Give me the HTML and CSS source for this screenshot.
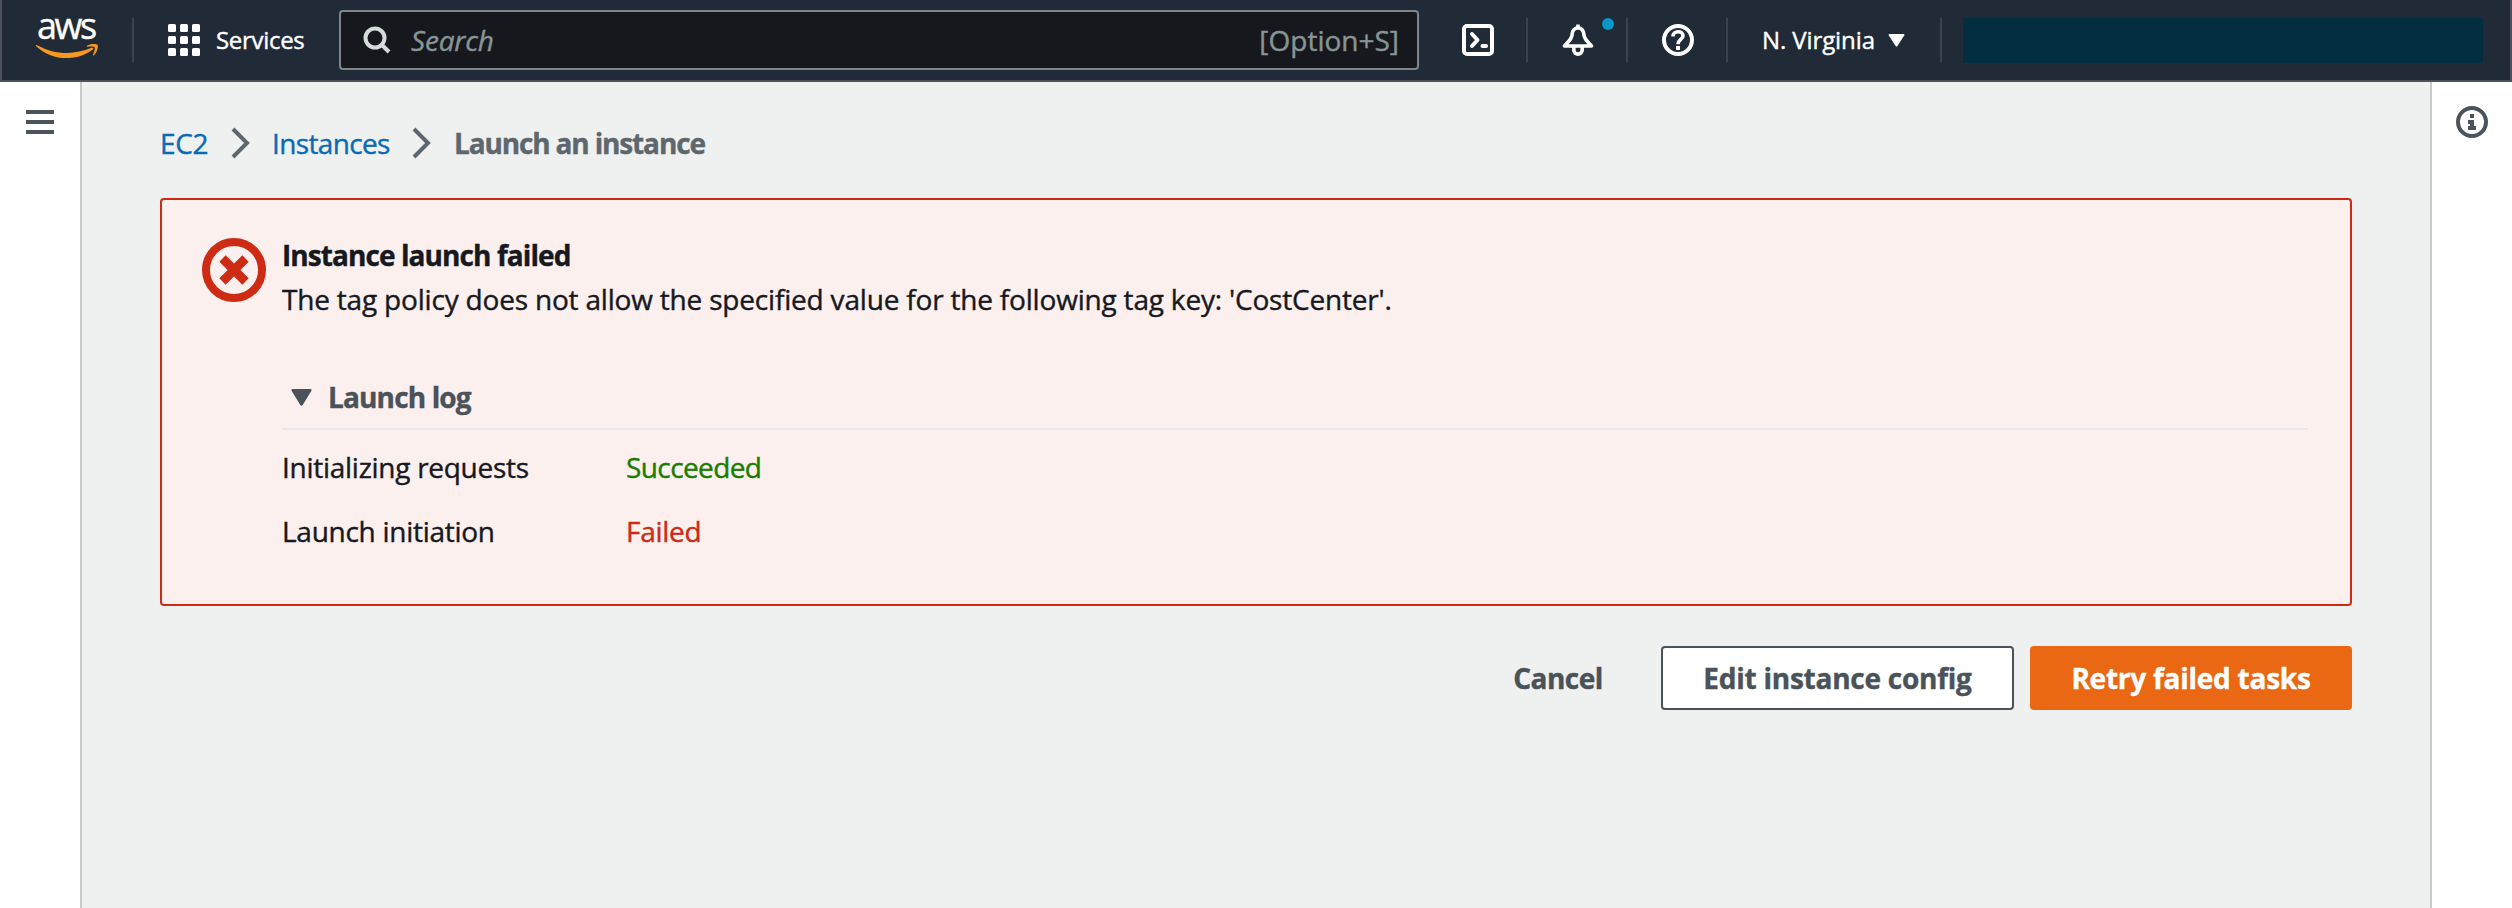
FILE: index.html
```
<!DOCTYPE html>
<html lang="en">
<head>
    <meta charset="UTF-8">
    <meta name="viewport" content="width=device-width, initial-scale=1.0">
    <title>Launch an instance | EC2</title>
    <link rel="stylesheet" href="styles.css">
</head>
<body>
    <header class="topnav">
        <a class="logo" href="#">
            <span class="logo-text">aws</span>
            <svg width="64" height="16" viewBox="0 25 64 16">
                <path fill="#f8991d" d="M1.2 28.2C0.2 27.3 1 26.6 2.2 27.2C20 37 39 37.2 56.5 29.8C58 29.2 59 30.6 57.8 31.5C42 43.5 17 43.5 1.2 28.2Z"/>
                <path fill="#f8991d" d="M52.5 28.8C51.5 28.9 51.4 28.1 52.2 27.6C55.5 25.3 61.5 25.7 62.6 27C63.5 28.5 62 34.5 59 37.2C58.3 37.8 57.7 37.5 58 36.7C59 34.3 60.4 30.5 59.7 29.5C58.8 28.4 55.2 28.5 52.5 28.8Z"/>
            </svg>
        </a>
        <a class="services" href="#">
            <svg width="32" height="32" viewBox="0 0 32 32" fill="#fff">
                <rect x="0" y="0" width="8" height="8" rx="1.5"/>
                <rect x="12" y="0" width="8" height="8" rx="1.5"/>
                <rect x="24" y="0" width="8" height="8" rx="1.5"/>
                <rect x="0" y="12" width="8" height="8" rx="1.5"/>
                <rect x="12" y="12" width="8" height="8" rx="1.5"/>
                <rect x="24" y="12" width="8" height="8" rx="1.5"/>
                <rect x="0" y="24" width="8" height="8" rx="1.5"/>
                <rect x="12" y="24" width="8" height="8" rx="1.5"/>
                <rect x="24" y="24" width="8" height="8" rx="1.5"/>
            </svg>
            <span>Services</span>
        </a>
        <div class="search">
            <svg width="28" height="28" viewBox="0 0 28 28" fill="none" stroke="#d5dbdb" stroke-width="4">
                <circle cx="12" cy="12" r="9.5"/>
                <path d="M18.5 18.5L26 26"/>
            </svg>
            <span class="search-label">Search</span>
            <span class="search-hint">[Option+S]</span>
        </div>
        <a class="nav-icon first" href="#">
            <svg width="32" height="32" viewBox="0 0 32 32" fill="none" stroke="#fff" stroke-width="4" stroke-linecap="round" stroke-linejoin="round">
                <rect x="2" y="2" width="28" height="28" rx="3"/>
                <path d="M10 10L15.5 16L10 22"/>
                <path d="M20.5 22H24"/>
            </svg>
        </a>
        <a class="nav-icon" href="#">
            <svg width="32" height="32" viewBox="0 0 32 32" fill="none" stroke="#fff" stroke-width="3.6" stroke-linejoin="round">
                <path d="M16 4C12 4 10.3 7 10 11C9.6 15.5 5.5 18.5 2.5 22H29.5C26.5 18.5 22.4 15.5 22 11C21.7 7 20 4 16 4Z"/>
                <path d="M16 0.5V4"/>
                <path d="M11.8 23V26C11.8 31.5 20.2 31.5 20.2 26V23"/>
            </svg>
            <span class="dot"></span>
        </a>
        <a class="nav-icon" href="#">
            <svg width="32" height="32" viewBox="0 0 32 32" fill="none" stroke="#fff">
                <circle cx="16" cy="16" r="14" stroke-width="4"/>
                <path d="M11 12.5C11 6.2 21 6.2 21 11.8C21 15.5 16 15.5 16 20.3" stroke-width="3.6"/>
                <path d="M16 22V26" stroke-width="4"/>
            </svg>
        </a>
        <a class="region" href="#">
            <span>N. Virginia</span>
            <svg width="17" height="13" viewBox="0 0 17 13" fill="#fff">
                <path d="M1.5 0H15.5Q17 0 16.2 1.4L9.4 12Q8.5 13 7.6 12L0.8 1.4Q0 0 1.5 0Z"/>
            </svg>
        </a>
        <div class="account"></div>
    </header>

    <div class="layout">
        <nav class="side left">
            <svg width="28" height="24" viewBox="0 0 28 24" fill="#4b535c">
                <rect width="28" height="4"/>
                <rect y="10" width="28" height="4"/>
                <rect y="20" width="28" height="4"/>
            </svg>
        </nav>

        <main class="content">
            <div class="breadcrumbs">
                <a class="crumb-ec2" href="#">EC2</a>
                <svg width="20" height="32" viewBox="0 0 20 32" fill="none" stroke="#5f676e" stroke-width="4">
                    <path d="M2 2L16 16L2 30"/>
                </svg>
                <a class="crumb-instances" href="#">Instances</a>
                <svg width="20" height="32" viewBox="0 0 20 32" fill="none" stroke="#5f676e" stroke-width="4">
                    <path d="M2 2L16 16L2 30"/>
                </svg>
                <span class="crumb-current">Launch an instance</span>
            </div>

            <section class="alert">
                <svg class="alert-icon" width="64" height="64" viewBox="0 0 64 64" fill="none" stroke="#cd2b13">
                    <circle cx="32" cy="32" r="28" stroke-width="8"/>
                    <path d="M20.5 20.5L43.5 43.5M43.5 20.5L20.5 43.5" stroke-width="9"/>
                </svg>
                <div class="alert-body">
                    <div class="alert-title">Instance launch failed</div>
                    <div class="alert-message">The tag policy does not allow the specified value for the following tag key: 'CostCenter'.</div>
                    <div class="log-header">
                        <svg width="21" height="17" viewBox="0 0 21 17" fill="#4a525a">
                            <path d="M1.5 0H19.5Q21 0.3 20.3 2L11.7 16Q10.5 17.5 9.3 16L0.7 2Q0 0.3 1.5 0Z"/>
                        </svg>
                        <span>Launch log</span>
                    </div>
                    <div class="log-rows">
                        <div class="log-name">Initializing requests</div>
                        <div class="succeeded">Succeeded</div>
                        <div class="log-name">Launch initiation</div>
                        <div class="failed">Failed</div>
                    </div>
                </div>
            </section>

            <div class="actions">
                <button class="button link">Cancel</button>
                <button class="button normal">Edit instance config</button>
                <button class="button primary">Retry failed tasks</button>
            </div>
        </main>

        <aside class="side right">
            <svg width="32" height="32" viewBox="0 0 32 32">
                <circle cx="16" cy="16" r="14" fill="none" stroke="#4b535c" stroke-width="4"/>
                <path fill="#4b535c" d="M14 8H18V12H14ZM12 14H18V20H20V24H12V20H14V18H12Z"/>
            </svg>
        </aside>
    </div>
</body>
</html>
```
FILE: styles.css
```
* {
    box-sizing: border-box;
}

body {
    margin: 0;
    height: 908px;
    overflow: hidden;
    display: flex;
    flex-direction: column;
    font-family: "Open Sans", "Noto Sans", sans-serif;
    font-size: 28px;
    line-height: 44px;
    color: #16191f;
    background-color: #eff1f0;
    -webkit-text-stroke: 0.4px;
}

a {
    color: inherit;
    text-decoration: none;
}

svg {
    display: block;
    flex: none;
}

/* Top navigation */
.topnav {
    display: flex;
    align-items: center;
    height: 82px;
    flex: none;
    background-color: #212a37;
    border: 2px solid #4c515c;
    border-top: 0;
    color: #fff;
    font-size: 24px;
    font-weight: 500;
    white-space: nowrap;
}

.logo {
    display: flex;
    flex-direction: column;
    justify-content: flex-end;
    width: 132px;
    height: 44px;
    padding: 0 0 3px 33px;
    border-right: 2px solid #3a424b;
}

.logo-text {
    padding-left: 2px;
    font-size: 36px;
    line-height: 34px;
    letter-spacing: -2.4px;
}

.services {
    display: flex;
    align-items: center;
    gap: 16px;
    width: 205px;
    padding-left: 34px;
    letter-spacing: -0.3px;
}

.search {
    display: flex;
    align-items: center;
    width: 1080px;
    height: 60px;
    padding: 0 18px 0 22px;
    border: 2px solid #7b8887;
    border-radius: 4px;
    background-color: #17181d;
    color: #879596;
    font-size: 28px;
    font-weight: 400;
}

.search-label {
    margin-left: 20px;
    font-style: italic;
    letter-spacing: -0.2px;
}

.search-hint {
    margin-left: auto;
}

.nav-icon {
    position: relative;
    display: flex;
    align-items: center;
    width: 100px;
    height: 44px;
    padding-left: 34px;
    border-right: 2px solid #3a424b;
}

.nav-icon.first {
    width: 109px;
    padding-left: 43px;
}

.dot {
    position: absolute;
    top: 0;
    right: 12px;
    width: 12px;
    height: 12px;
    border-radius: 50%;
    background-color: #0497c8;
}

.region {
    display: flex;
    align-items: center;
    gap: 13px;
    width: 214px;
    height: 44px;
    padding-left: 34px;
    border-right: 2px solid #3a424b;
    letter-spacing: -0.1px;
}

.account {
    width: 520px;
    height: 45px;
    margin-left: 21px;
    background-color: #022e40;
}

/* Page */
.layout {
    display: flex;
    flex: 1;
}

.side {
    width: 82px;
    flex: none;
    background-color: #fff;
}

.left {
    padding: 28px 0 0 26px;
    border-right: 2px solid #c5cacc;
}

.right {
    padding: 24px 0 0 24px;
    border-left: 2px solid #c5cacc;
}

.content {
    flex: 1;
    padding: 39px 78px 0;
}

.breadcrumbs {
    display: flex;
    align-items: center;
    height: 44px;
    margin-bottom: 33px;
    color: #0a6ab6;
}

.crumb-ec2 {
    width: 71px;
    letter-spacing: -0.4px;
}

.crumb-instances {
    width: 140px;
    margin-left: 21px;
    letter-spacing: -0.65px;
}

.crumb-current {
    margin-left: 22px;
    font-weight: 700;
    letter-spacing: -1.15px;
    color: #5f676e;
}

.alert {
    display: flex;
    height: 408px;
    padding: 33px 42px 0 40px;
    border: 2px solid #cd2b13;
    border-radius: 4px;
    background-color: #fcf0ee;
}

.alert-icon {
    margin-top: 5px;
    margin-right: 16px;
}

.alert-body {
    flex: 1;
}

.alert-title {
    font-weight: 700;
    letter-spacing: -0.92px;
}

.alert-message {
    letter-spacing: -0.19px;
}

.log-header {
    display: flex;
    align-items: center;
    gap: 16px;
    margin-top: 54px;
    padding: 0 0 9px 9px;
    border-bottom: 2px solid #e8e8e9;
    font-weight: 700;
    letter-spacing: -0.85px;
    color: #4a525a;
}

.log-rows {
    display: grid;
    grid-template-columns: 344px 1fr;
    row-gap: 20px;
    padding-top: 15px;
    letter-spacing: -0.27px;
}

.succeeded {
    letter-spacing: -0.6px;
    color: #1a7c02;
}

.failed {
    color: #cd2b13;
}

.actions {
    display: flex;
    justify-content: flex-end;
    margin-top: 40px;
}

.button {
    height: 64px;
    padding: 0;
    border: 2px solid transparent;
    border-radius: 4px;
    background: none;
    font: inherit;
    font-weight: 700;
    letter-spacing: -0.25px;
    white-space: nowrap;
    color: #4a525a;
}

.link {
    width: 176px;
    margin-right: 15px;
    letter-spacing: -0.5px;
}

.normal {
    width: 353px;
    margin-right: 16px;
    border-color: #4a525a;
    background-color: #fff;
}

.primary {
    width: 322px;
    background-color: #ea6714;
    color: #fff;
}
```
